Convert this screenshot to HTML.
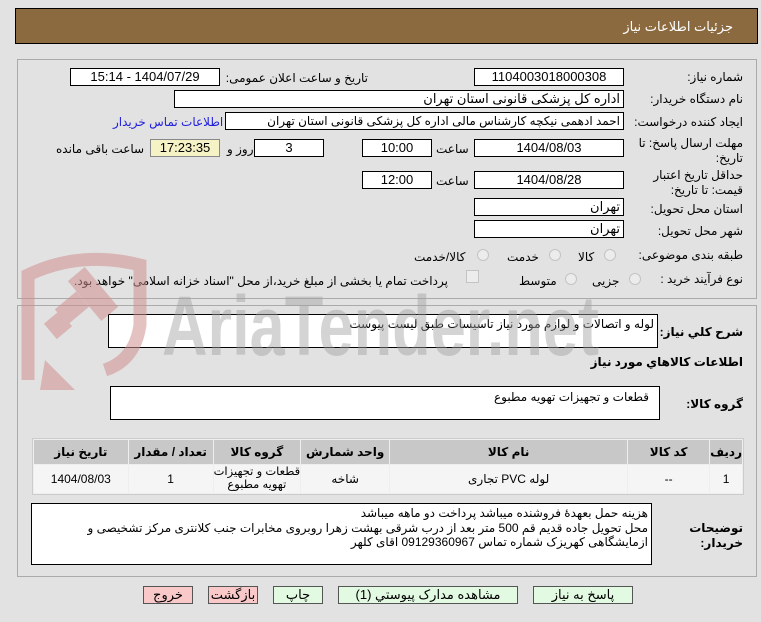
<!DOCTYPE html>
<html><head><meta charset="utf-8"><style>
body{margin:0;width:761px;height:622px;background:#e2e2e2;font-family:"Liberation Sans","DejaVu Sans",sans-serif;font-size:12px;color:#000;position:relative;overflow:hidden}
.a{position:absolute}
.hdr{left:15px;top:8px;width:743px;height:36px;background:#8c6a40;border:1px solid #000;box-sizing:border-box}
.hdr span{position:absolute;right:24px;top:10px;color:#fff;font-size:13px}
.panel{border:1px solid #aaa;box-sizing:border-box}
.box{position:absolute;background:#fff;border:1px solid #000;box-sizing:border-box;height:18px;line-height:16px;text-align:center;direction:rtl;font-size:13px;white-space:nowrap;overflow:hidden}
.l{position:absolute;direction:rtl;text-align:right;white-space:nowrap;font-size:12px;line-height:14px}
.r{text-align:right;padding-right:3px}
.rad{position:absolute;width:10px;height:10px;border:1px solid #c4c4c4;border-radius:50%;background:#ececec}
table{position:absolute;left:32px;top:438px;width:712px;border-collapse:separate;border-spacing:1px;background:#eee;border:1px solid #ccc;direction:rtl}
th{background:#c8c8c8;height:24px;font-size:12px;padding:0;white-space:nowrap}
td{background:#f5f5f5;height:28px;text-align:center;font-size:12px;padding:0;line-height:13px;white-space:nowrap}
.btn{position:absolute;top:586px;height:18px;border:1px solid #555;box-sizing:border-box;text-align:center;line-height:16px;font-size:13px;direction:rtl}
</style></head><body>
<div class="a hdr"><span>جزئیات اطلاعات نیاز</span></div>
<div class="a panel" style="left:17px;top:59px;width:740px;height:240px"></div>
<div class="a panel" style="left:17px;top:305px;width:740px;height:272px"></div>

<div class="l" style="right:18px;top:70px">شماره نیاز:</div>
<div class="box" style="left:474px;top:68px;width:150px">1104003018000308</div>
<div class="l" style="right:393px;top:71px">تاریخ و ساعت اعلان عمومی:</div>
<div class="box" style="left:70px;top:68px;width:150px">1404/07/29 - 15:14</div>

<div class="l" style="right:18px;top:92px">نام دستگاه خریدار:</div>
<div class="box r" style="left:174px;top:90px;width:450px">اداره کل پزشکی قانونی استان تهران</div>

<div class="l" style="right:18px;top:115px">ایجاد کننده درخواست:</div>
<div class="box r" style="left:225px;top:112px;width:399px;font-size:12px">احمد ادهمی نیکچه کارشناس مالی اداره کل پزشکی قانونی استان تهران</div>
<div class="l" style="left:113px;top:115px;color:#2020dd;font-size:12px">اطلاعات تماس خریدار</div>

<div class="l" style="right:18px;top:136px;line-height:15px">مهلت ارسال پاسخ: تا<br>تاریخ:</div>
<div class="box" style="left:474px;top:139px;width:150px">1404/08/03</div>
<div class="l" style="left:436px;top:142px">ساعت</div>
<div class="box" style="left:362px;top:139px;width:70px">10:00</div>
<div class="box" style="left:254px;top:139px;width:70px">3</div>
<div class="l" style="left:227px;top:142px">روز و</div>
<div class="box" style="left:150px;top:139px;width:70px;background:#f5f2c6;border-color:#888">17:23:35</div>
<div class="l" style="left:56px;top:142px">ساعت باقی مانده</div>

<div class="l" style="right:18px;top:168px;line-height:15px">حداقل تاریخ اعتبار<br>قیمت: تا تاریخ:</div>
<div class="box" style="left:474px;top:171px;width:150px">1404/08/28</div>
<div class="l" style="left:436px;top:174px">ساعت</div>
<div class="box" style="left:362px;top:171px;width:70px">12:00</div>

<div class="l" style="right:18px;top:202px">استان محل تحویل:</div>
<div class="box r" style="left:474px;top:198px;width:150px">تهران</div>
<div class="l" style="right:18px;top:224px">شهر محل تحویل:</div>
<div class="box r" style="left:474px;top:220px;width:150px">تهران</div>

<div class="l" style="right:18px;top:248px">طبقه بندی موضوعی:</div>
<div class="rad" style="left:604px;top:249px"></div><div class="l" style="left:578px;top:250px">کالا</div>
<div class="rad" style="left:549px;top:249px"></div><div class="l" style="left:507px;top:250px">خدمت</div>
<div class="rad" style="left:477px;top:249px"></div><div class="l" style="left:414px;top:250px">کالا/خدمت</div>

<div class="l" style="right:18px;top:272px">نوع فرآیند خرید :</div>
<div class="rad" style="left:629px;top:273px"></div><div class="l" style="left:592px;top:274px">جزیی</div>
<div class="rad" style="left:565px;top:273px"></div><div class="l" style="left:519px;top:274px">متوسط</div>
<div class="a" style="left:466px;top:270px;width:11px;height:11px;border:1px solid #c4c4c4;background:#ececec"></div>
<div class="l" style="left:74px;top:274px">پرداخت تمام یا بخشی از مبلغ خرید،از محل "اسناد خزانه اسلامی" خواهد بود.</div>

<div class="l" style="right:18px;top:325px;font-weight:bold">شرح کلي نیاز:</div>
<div class="box" style="left:108px;top:314px;width:550px;height:34px;text-align:right;padding-right:3px;line-height:18px;font-size:12px">لوله و اتصالات و لوازم مورد نیاز تاسیسات طبق لیست پیوست</div>
<div class="l" style="right:18px;top:355px;font-weight:bold">اطلاعات کالاهاي مورد نیاز</div>
<div class="l" style="right:18px;top:397px;font-weight:bold">گروه کالا:</div>
<div class="box" style="left:110px;top:386px;width:550px;height:34px;text-align:right;padding-right:10px;line-height:20px;font-size:12px">قطعات و تجهیزات تهویه مطبوع</div>

<table><tr><th style="width:27px">ردیف</th><th style="width:81px">کد کالا</th><th style="width:237px">نام کالا</th><th style="width:88px">واحد شمارش</th><th style="width:86px">گروه کالا</th><th style="width:84px">تعداد / مقدار</th><th>تاریخ نیاز</th></tr>
<tr><td>1</td><td>--</td><td>لوله PVC تجاری</td><td>شاخه</td><td style="font-size:11.5px">قطعات و تجهیزات<br>تهویه مطبوع</td><td>1</td><td>1404/08/03</td></tr></table>

<div class="l" style="right:18px;top:521px;font-weight:bold;line-height:15px">توضیحات<br>خریدار:</div>
<div class="box" style="left:31px;top:503px;width:621px;height:62px;text-align:right;padding-right:3px;padding-top:2px;line-height:14.5px;font-size:12px">هزینه حمل بعهدهٔ فروشنده میباشد پرداخت دو ماهه میباشد<br>محل تحویل جاده قدیم قم 500 متر بعد از درب شرقی بهشت زهرا روبروی مخابرات جنب کلانتری مرکز تشخیصی و<br>ازمایشگاهی کهریزک شماره تماس 09129360967 اقای کلهر</div>

<div class="btn" style="left:143px;width:50px;background:#f9c9c9">خروج</div>
<div class="btn" style="left:208px;width:50px;background:#f9c9c9">بازگشت</div>
<div class="btn" style="left:273px;width:50px;background:#e2f9e2">چاپ</div>
<div class="btn" style="left:338px;width:180px;background:#e2f9e2">مشاهده مدارک پیوستي (1)</div>
<div class="btn" style="left:533px;width:100px;background:#e2f9e2">پاسخ به نیاز</div>

<svg class="a" style="left:0;top:230px;pointer-events:none" width="761" height="170" viewBox="0 0 761 170">
<g opacity="0.55">
<path d="M28 150 L28 45 Q80 20 140 35 L140 95 Q135 130 105 140" fill="none" stroke="#d08f8f" stroke-width="13"/>
<path d="M45 130 L75 160 L40 160 Z" fill="#d08f8f"/>
<g fill="#d08f8f"><rect x="58" y="68" width="28" height="20" transform="rotate(-40 72 78)"/><rect x="82" y="38" width="22" height="52" transform="rotate(-40 93 64)"/><rect x="48" y="85" width="20" height="20" transform="rotate(-40 58 95)"/></g>
</g>
<text x="162" y="125" font-family="Liberation Sans, sans-serif" font-weight="bold" font-size="84" fill="#a0a0a0" fill-opacity="0.45" textLength="437" lengthAdjust="spacingAndGlyphs">AriaTender.net</text>
</svg>
</body></html>
